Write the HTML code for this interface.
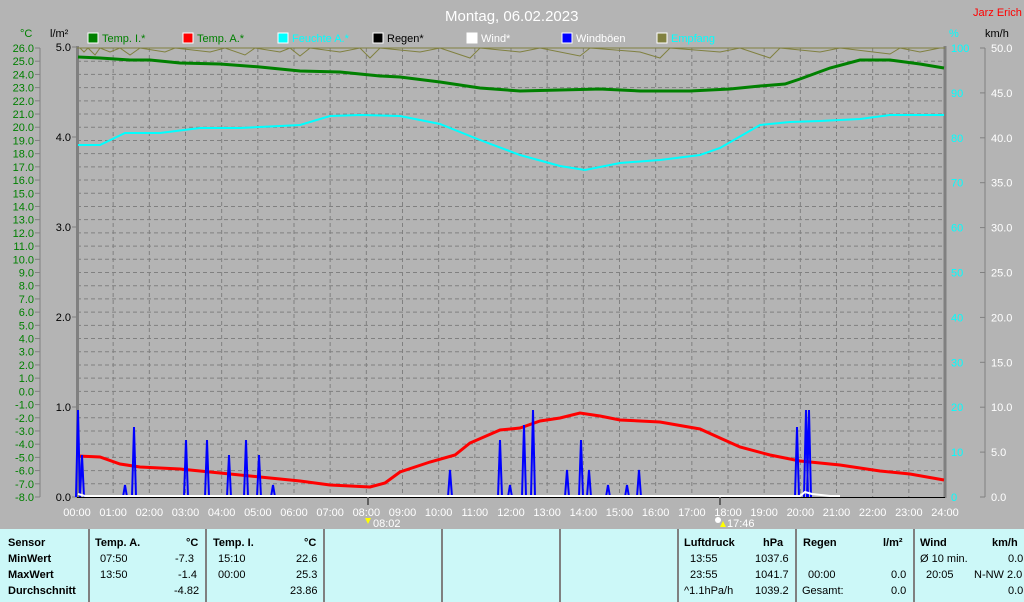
<!DOCTYPE html>
<html><head><meta charset="utf-8"><style>
body{margin:0;width:1024px;height:602px;overflow:hidden;background:#b4b4b4;font-family:"Liberation Sans",sans-serif;}
.p{position:absolute;left:0;top:529px;width:1024px;height:73px;background:#ccf8f8;}
.t{position:absolute;font-size:11px;color:#000;white-space:nowrap}
.b{font-weight:bold}
.d{position:absolute;top:0;width:2px;height:73px;background:#808080}
</style></head><body>
<svg width="1024" height="529" style="position:absolute;left:0;top:0" font-family="Liberation Sans, sans-serif">
<text x="445" y="21" font-size="15" fill="#fff">Montag, 06.02.2023</text>
<text x="973" y="16" font-size="11" fill="#f00">Jarz Erich</text>
<g font-size="11">
<text x="20" y="37" fill="#008000">°C</text><text x="50" y="37" fill="#000">l/m²</text>
<text x="949" y="37" fill="#0ff">%</text><text x="985" y="37" fill="#000">km/h</text>
<rect x="88" y="33" width="10" height="10" fill="#008000" stroke="#fff"/><text x="102" y="42" fill="#008000">Temp. I.*</text>
<rect x="183" y="33" width="10" height="10" fill="#f00" stroke="#fff"/><text x="197" y="42" fill="#008000">Temp. A.*</text>
<rect x="278" y="33" width="10" height="10" fill="#0ff" stroke="#fff"/><text x="292" y="42" fill="#0ff">Feuchte A.*</text>
<rect x="373" y="33" width="10" height="10" fill="#000" stroke="#fff"/><text x="387" y="42" fill="#000">Regen*</text>
<rect x="467" y="33" width="10" height="10" fill="#fff" stroke="#fff"/><text x="481" y="42" fill="#fff">Wind*</text>
<rect x="562" y="33" width="10" height="10" fill="#00f" stroke="#fff"/><text x="576" y="42" fill="#fff">Windböen</text>
<rect x="657" y="33" width="10" height="10" fill="#808040" stroke="#fff"/><text x="671" y="42" fill="#0ff">Empfang</text>
</g>
<g id="grid" stroke="#808080" stroke-dasharray="4,3" stroke-width="1"></g>
<line x1="40" y1="48" x2="40" y2="497" stroke="#808080"/>
<line x1="985" y1="48" x2="985" y2="497" stroke="#808080"/>
<g id="lab" font-size="11"></g>
<line x1="77.5" y1="46" x2="77.5" y2="498" stroke="#808080" stroke-width="3"/>
<line x1="945" y1="46" x2="945" y2="498" stroke="#808080" stroke-width="3"/>
<line x1="77" y1="497.5" x2="945" y2="497.5" stroke="#000"/>
<line x1="77" y1="48" x2="945" y2="48" stroke="#808040"/>
<polyline fill="none" stroke="#808040" points="80,48 84,52 88,48 95,55 100,48 110,52 120,48 130,55 140,48 165,52 175,48 210,52 225,48 245,55 255,48 280,52 290,48 300,56 310,48 340,52 360,48 370,58 380,48 420,52 440,48 470,58 480,48 520,52 540,48 580,56 590,48 640,52 660,58 670,48 720,52 740,48 770,58 780,48 820,52 840,48 890,54 900,48 920,52 940,48"/>
<polyline fill="none" stroke="#0ff" stroke-width="2" points="78,145 100,145 125,133 160,133 200,128 240,128 280,126 300,125 330,116 360,115 400,116 440,124 480,140 520,155 560,166 585,170 620,163 660,160 700,155 720,148 760,125 790,122 820,121 860,119 890,115 944,115"/>
<polyline fill="none" stroke="#008000" stroke-width="3" points="78,57 100,58 130,60 150,60 180,63 220,64 260,67 300,71 340,72 380,76 400,77 440,82 480,88 520,91 560,90 600,89 640,91 690,91 730,89 760,86 785,84 800,79 830,68 860,60 890,60 920,64 944,68"/>
<polyline fill="none" stroke="#f00" stroke-width="3" points="78,456 100,457 120,464 140,467 180,469 220,473 260,477 300,481 330,485 370,487 385,483 400,472 430,462 455,455 470,443 500,430 520,428 540,421 560,418 580,413 600,416 620,420 660,422 700,429 720,438 740,447 770,455 800,461 840,465 880,471 910,474 944,480"/>
<g id="wb" fill="none" stroke="#00f" stroke-width="2"></g>
<polyline fill="none" stroke="#fff" stroke-width="2" points="78,494 85,496 100,496 800,496 805,492 812,494 830,496 840,496"/>
<g id="tl" font-size="11" fill="#fff"></g>
<line x1="368" y1="497" x2="368" y2="505" stroke="#606060" stroke-width="2"/>
<line x1="720" y1="497" x2="720" y2="505" stroke="#606060" stroke-width="2"/>
<path d="M365,518 l3,6 l3,-6 z" fill="#ff0"/><text x="373" y="527" font-size="11" fill="#fff">08:02</text>
<circle cx="718" cy="520" r="3" fill="#fff"/><path d="M720,527 l3,-6 l3,6 z" fill="#ff0"/><text x="727" y="527" font-size="11" fill="#fff">17:46</text>
</svg>
<div class="p">
<div class="d" style="left:88px"></div><div class="d" style="left:205px"></div><div class="d" style="left:323px"></div><div class="d" style="left:441px"></div><div class="d" style="left:559px"></div><div class="d" style="left:677px"></div><div class="d" style="left:795px"></div><div class="d" style="left:913px"></div>
<div class="t b" style="left:8px;top:8px">Sensor</div><div class="t b" style="left:8px;top:24px">MinWert</div><div class="t b" style="left:8px;top:40px">MaxWert</div><div class="t b" style="left:8px;top:56px">Durchschnitt</div>
<div class="t b" style="left:95px;top:8px">Temp. A.</div><div class="t b" style="left:186px;top:8px">°C</div>
<div class="t" style="left:100px;top:24px">07:50</div><div class="t" style="left:175px;top:24px">-7.3</div>
<div class="t" style="left:100px;top:40px">13:50</div><div class="t" style="left:178px;top:40px">-1.4</div>
<div class="t" style="left:174px;top:56px">-4.82</div>
<div class="t b" style="left:213px;top:8px">Temp. I.</div><div class="t b" style="left:304px;top:8px">°C</div>
<div class="t" style="left:218px;top:24px">15:10</div><div class="t" style="left:296px;top:24px">22.6</div>
<div class="t" style="left:218px;top:40px">00:00</div><div class="t" style="left:296px;top:40px">25.3</div>
<div class="t" style="left:290px;top:56px">23.86</div>
<div class="t b" style="left:684px;top:8px">Luftdruck</div><div class="t b" style="left:763px;top:8px">hPa</div>
<div class="t" style="left:690px;top:24px">13:55</div><div class="t" style="left:755px;top:24px">1037.6</div>
<div class="t" style="left:690px;top:40px">23:55</div><div class="t" style="left:755px;top:40px">1041.7</div>
<div class="t" style="left:684px;top:56px">^1.1hPa/h</div><div class="t" style="left:755px;top:56px">1039.2</div>
<div class="t b" style="left:803px;top:8px">Regen</div><div class="t b" style="left:883px;top:8px">l/m²</div>
<div class="t" style="left:808px;top:40px">00:00</div><div class="t" style="left:891px;top:40px">0.0</div>
<div class="t" style="left:802px;top:56px">Gesamt:</div><div class="t" style="left:891px;top:56px">0.0</div>
<div class="t b" style="left:920px;top:8px">Wind</div><div class="t b" style="left:992px;top:8px">km/h</div>
<div class="t" style="left:920px;top:24px">Ø 10 min.</div><div class="t" style="left:1008px;top:24px">0.0</div>
<div class="t" style="left:926px;top:40px">20:05</div><div class="t" style="left:974px;top:40px">N-NW 2.0</div>
<div class="t" style="left:1008px;top:56px">0.0</div>
</div>
<script>
(function(){
var ns="http://www.w3.org/2000/svg";
function el(p,t,a,txt){var e=document.createElementNS(ns,t);for(var k in a)e.setAttribute(k,a[k]);if(txt!=null)e.textContent=txt;document.getElementById(p).appendChild(e);}
var T=48,B=497,L=77,R=945,h=(B-T)/34,w=(R-L)/24;
for(var i=1;i<34;i++)el("grid","line",{x1:L,x2:R,y1:T+i*h,y2:T+i*h});
for(var i=1;i<24;i++)el("grid","line",{x1:L+i*w,x2:L+i*w,y1:T,y2:B});
for(var i=0;i<=34;i++){var y=T+i*h;el("lab","text",{x:34,y:y+4,"text-anchor":"end",fill:"#008000"},(26-i).toFixed(1));el("lab","line",{x1:35,x2:40,y1:y,y2:y,stroke:"#808080"});}
for(var i=0;i<=5;i++){var y=B-i*90;el("lab","text",{x:71,y:y+4,"text-anchor":"end",fill:"#000"},i.toFixed(1));el("lab","line",{x1:72,x2:77,y1:y,y2:y,stroke:"#808080"});}
for(var i=0;i<=10;i++){var y=B-i*44.9;el("lab","text",{x:951,y:y+4,fill:"#0ff"},String(i*10));el("lab","text",{x:991,y:y+4,fill:"#fff"},(i*5).toFixed(1));el("lab","line",{x1:980,x2:985,y1:y,y2:y,stroke:"#808080"});}
for(var i=0;i<=24;i++){el("tl","text",{x:L+i*w,y:516,"text-anchor":"middle"},(i<10?"0":"")+i+":00");}
var sp=[[78,410],[82,455],[125,485],[134,427],[186,440],[207,440],[229,455],[246,440],[259,455],[273,485],[450,470],[500,440],[510,485],[524,425],[533,410],[567,470],[581,440],[589,470],[608,485],[627,485],[639,470],[797,427],[806,410],[809,410]];
sp.forEach(function(s){el("wb","polyline",{points:(s[0]-2)+",497 "+s[0]+","+s[1]+" "+(s[0]+2)+",497"});});
})();
</script>
</body></html>
